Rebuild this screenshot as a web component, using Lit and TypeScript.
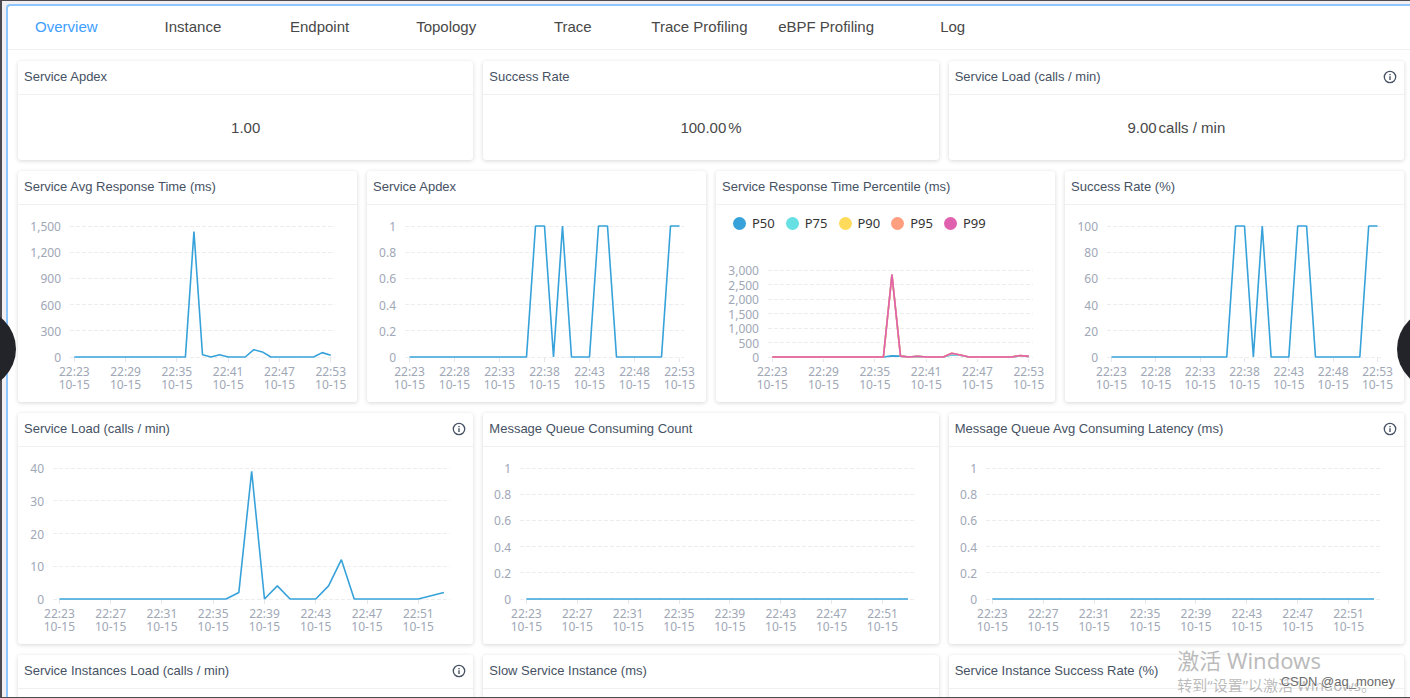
import { LitElement, html, svg, css, nothing } from "lit";
import { customElement, property, state } from "lit/decorators.js";
import { classMap } from "lit/directives/class-map.js";
import { styleMap } from "lit/directives/style-map.js";

interface Series {
  name: string;
  color: string;
  values: number[];
}

interface ChartSpec {
  max: number;
  ticks: string[];
  interval: number;
  left: number;
  right: number;
  legend?: boolean;
  series: Series[];
}

interface Widget {
  title: string;
  info?: boolean;
  value?: string;
  unit?: string;
  chart?: ChartSpec;
}

const POINTS = 31;
const START_MINUTE = 23;
const BLUE = "#37a2da";

/** Expands a sparse { minute index: value } map to the full time range. */
const sparse = (points: Record<number, number>): number[] =>
  Array.from({ length: POINTS }, (_, i) => points[i] ?? 0);

const single = (points: Record<number, number>): Series[] => [
  { name: "value", color: BLUE, values: sparse(points) },
];

const FRACTIONS = ["0", "0.2", "0.4", "0.6", "0.8", "1"];

const VALUES: Widget[] = [
  { title: "Service Apdex", value: "1.00" },
  { title: "Success Rate", value: "100.00", unit: "%" },
  { title: "Service Load (calls / min)", info: true, value: "9.00", unit: "calls / min" },
];

const RESPONSE: Widget[] = [
  {
    title: "Service Avg Response Time (ms)",
    chart: {
      max: 1500,
      ticks: ["0", "300", "600", "900", "1,200", "1,500"],
      interval: 6,
      left: 52,
      right: 22,
      series: single({ 14: 1435, 15: 25, 17: 25, 21: 84, 22: 58, 29: 50, 30: 20 }),
    },
  },
  {
    title: "Service Apdex",
    chart: {
      max: 1,
      ticks: FRACTIONS,
      interval: 5,
      left: 38,
      right: 22,
      series: single({ 14: 1, 15: 1, 17: 1, 21: 1, 22: 1, 29: 1, 30: 1 }),
    },
  },
  {
    title: "Service Response Time Percentile (ms)",
    chart: {
      max: 3000,
      ticks: ["0", "500", "1,000", "1,500", "2,000", "2,500", "3,000"],
      interval: 6,
      left: 52,
      right: 22,
      legend: true,
      series: [
        { name: "P50", color: BLUE, values: sparse({ 14: 40, 15: 30, 17: 20, 21: 80, 22: 60, 29: 40, 30: 20 }) },
        { name: "P75", color: "#67e0e3", values: sparse({ 14: 2840, 15: 30, 17: 20, 21: 90, 22: 65, 29: 45, 30: 20 }) },
        { name: "P90", color: "#ffdb5c", values: sparse({ 14: 2840, 15: 30, 17: 25, 21: 130, 22: 70, 29: 50, 30: 20 }) },
        { name: "P95", color: "#ff9f7f", values: sparse({ 14: 2840, 15: 30, 17: 25, 21: 130, 22: 70, 29: 50, 30: 20 }) },
        { name: "P99", color: "#e062ae", values: sparse({ 14: 2840, 15: 30, 17: 25, 21: 130, 22: 70, 29: 50, 30: 20 }) },
      ],
    },
  },
  {
    title: "Success Rate (%)",
    chart: {
      max: 100,
      ticks: ["0", "20", "40", "60", "80", "100"],
      interval: 5,
      left: 42,
      right: 22,
      series: single({ 14: 100, 15: 100, 17: 100, 21: 100, 22: 100, 29: 100, 30: 100 }),
    },
  },
];

const LOAD: Widget[] = [
  {
    title: "Service Load (calls / min)",
    info: true,
    chart: {
      max: 40,
      ticks: ["0", "10", "20", "30", "40"],
      interval: 4,
      left: 35,
      right: 23,
      series: single({ 14: 2, 15: 39, 17: 4, 21: 4, 22: 12, 29: 1, 30: 2 }),
    },
  },
  {
    title: "Message Queue Consuming Count",
    chart: { max: 1, ticks: FRACTIONS, interval: 4, left: 37, right: 24, series: single({}) },
  },
  {
    title: "Message Queue Avg Consuming Latency (ms)",
    info: true,
    chart: { max: 1, ticks: FRACTIONS, interval: 4, left: 37, right: 24, series: single({}) },
  },
];

const INSTANCES: Widget[] = [
  { title: "Service Instances Load (calls / min)", info: true },
  { title: "Slow Service Instance (ms)" },
  { title: "Service Instance Success Rate (%)" },
];

@customElement("line-chart")
export class LineChart extends LitElement {
  @property({ attribute: false }) spec!: ChartSpec;

  static styles = css`
    :host {
      display: flex;
      flex-direction: column;
      flex: 1;
      min-height: 0;
      margin: 0 10px;
      overflow: hidden;
      font-family: "Noto Sans", "Open Sans", sans-serif;
    }
    .legend {
      display: flex;
      gap: 11px;
      margin: 0;
      padding: 9px 0 0 7px;
      list-style: none;
      color: #333;
      font-size: 13px;
      line-height: 18px;
    }
    .entry {
      display: flex;
      align-items: center;
      gap: 6px;
    }
    .dot {
      width: 13px;
      height: 13px;
      border-radius: 50%;
    }
    .area {
      display: flex;
      flex: 1;
      min-height: 0;
      padding-top: 21px;
      padding-bottom: 45px;
    }
    .area.below {
      padding-top: 38px;
    }
    .plot {
      flex: 1;
      width: 100%;
      min-width: 0;
      height: auto;
      overflow: visible;
    }
    .grid {
      stroke: #ededf0;
      stroke-dasharray: 4 2;
      shape-rendering: crispEdges;
    }
    .tick {
      stroke: #e4e6ec;
      shape-rendering: crispEdges;
    }
    .label {
      fill: #a0a7b6;
      font-size: 12px;
    }
    .line {
      fill: none;
      stroke-width: 1.6;
      stroke-linejoin: bevel;
      vector-effect: non-scaling-stroke;
    }
  `;

  private yAxis() {
    const { ticks } = this.spec;
    return ticks.map((text, i) => {
      const y = `${100 - (i / (ticks.length - 1)) * 100}%`;
      return svg`
        <line class="grid" x1="0" x2="100%" y1=${y} y2=${y}></line>
        <text class="label" x="-9" y=${y} dy="5" text-anchor="end">${text}</text>`;
    });
  }

  private xAxis() {
    const marks = [];
    for (let i = 0; i < POINTS; i += this.spec.interval) {
      const x = `${((i + 0.5) / POINTS) * 100}%`;
      marks.push(svg`
        <g transform="translate(0 5)">
          <line class="tick" x1=${x} x2=${x} y1="97%" y2="100%"></line>
        </g>
        <text class="label" x=${x} y="100%" dy="19" text-anchor="middle">22:${START_MINUTE + i}</text>
        <text class="label" x=${x} y="100%" dy="32" text-anchor="middle">10-15</text>`);
    }
    return marks;
  }

  private lines() {
    const { series, max } = this.spec;
    return series.map((s) => {
      const points = s.values.map((v, i) => `${i + 0.5},${100 - (v / max) * 100}`).join(" ");
      return svg`<polyline class="line" points=${points} stroke=${s.color}></polyline>`;
    });
  }

  render() {
    const { left, right, legend, series } = this.spec;
    // The host keeps 10px free on both sides of the card.
    const margins = styleMap({ marginLeft: `${left - 10}px`, marginRight: `${right - 10}px` });
    return html`
      ${legend
        ? html`<ul class="legend">
            ${series.map(
              (s) => html`<li class="entry">
                <span class="dot" style=${styleMap({ background: s.color })}></span>${s.name}
              </li>`,
            )}
          </ul>`
        : nothing}
      <div class=${classMap({ area: true, below: !!legend })}>
        <svg class="plot" style=${margins} role="img" aria-label="Line chart">
          ${this.yAxis()} ${this.xAxis()}
          <svg width="100%" height="100%" viewBox="0 0 ${POINTS} 100" preserveAspectRatio="none" overflow="visible">
            ${this.lines()}
          </svg>
        </svg>
      </div>
    `;
  }
}

@customElement("dashboard-card")
export class DashboardCard extends LitElement {
  @property({ attribute: false }) widget!: Widget;

  static styles = css`
    :host {
      display: flex;
      flex-direction: column;
      min-width: 0;
      border-radius: 3px;
      background: #fff;
      box-shadow: 0 1px 4px rgba(0, 0, 0, 0.16);
    }
    .head {
      display: flex;
      flex-shrink: 0;
      align-items: center;
      justify-content: space-between;
      box-sizing: border-box;
      height: 34px;
      padding: 0 7px 2px 6px;
      border-bottom: 1px solid #f0f0f0;
    }
    .title {
      margin: 0;
      color: #465264;
      font-size: 13px;
      font-weight: 400;
      line-height: 18px;
      white-space: nowrap;
    }
    .info {
      display: flex;
      margin: 0;
      padding: 0;
      border: 0;
      background: none;
      color: #465264;
      cursor: pointer;
    }
    .value {
      display: flex;
      flex: 1;
      align-items: center;
      justify-content: center;
      gap: 2px;
      color: #484848;
      font-size: 15px;
    }
  `;

  render() {
    const { title, info, value, unit, chart } = this.widget;
    return html`
      <header class="head">
        <h2 class="title">${title}</h2>
        ${info
          ? html`<button class="info" aria-label="About ${title}">
              <svg width="14" height="14" viewBox="0 0 14 14" fill="none" stroke="currentColor">
                <circle cx="7" cy="7" r="5.7" stroke-width="1.3" />
                <path d="M7 6.3V10" stroke-width="1.4" />
                <path d="M7 4v1.3" stroke-width="1.4" />
              </svg>
            </button>`
          : nothing}
      </header>
      ${value
        ? html`<div class="value"><span>${value}</span>${unit ? html`<span>${unit}</span>` : nothing}</div>`
        : nothing}
      ${chart ? html`<line-chart .spec=${chart}></line-chart>` : nothing}
    `;
  }
}

@customElement("app-root")
export class AppRoot extends LitElement {
  @state() private active = "Overview";

  private tabs = [
    "Overview",
    "Instance",
    "Endpoint",
    "Topology",
    "Trace",
    "Trace Profiling",
    "eBPF Profiling",
    "Log",
  ];

  static styles = css`
    :host {
      display: flex;
      box-sizing: border-box;
      height: 100vh;
      padding: 3px 0 0 4px;
      border: solid #4c4a4e;
      border-width: 1px 0 1px 2px;
      overflow: hidden;
      background: #f1eff2;
      font-family: "Liberation Sans", Arial, sans-serif;
    }
    .panel {
      flex: 1;
      min-width: 0;
      border: 2px solid #8fc6ff;
      border-width: 2px 0 0 2px;
      border-top-left-radius: 4px;
      overflow: hidden;
      background: #fff;
    }
    .tabs {
      display: flex;
      margin-left: -5px;
      border-bottom: 1px solid #f0f0f0;
    }
    .tab {
      flex: 0 0 9%;
      height: 43px;
      padding: 0 0 2px;
      border: 0;
      background: none;
      color: #484848;
      font: 15px "Liberation Sans", Arial, sans-serif;
      white-space: nowrap;
      cursor: pointer;
    }
    .tab.active {
      color: #409eff;
    }
    .board {
      display: flex;
      flex-direction: column;
      gap: 11px;
      padding: 11px 6px 11px 10px;
    }
    .row {
      display: grid;
      grid-auto-columns: minmax(0, 1fr);
      grid-auto-flow: column;
      gap: 10px;
    }
    .short {
      grid-auto-rows: 99px;
    }
    .tall {
      grid-auto-rows: 231px;
    }
    .arrow {
      position: absolute;
      top: 50%;
      width: 80px;
      height: 80px;
      margin-top: -40px;
      padding: 0;
      border: 0;
      border-radius: 50%;
      background: #232429;
    }
    .previous {
      left: -64px;
    }
    .next {
      right: -67px;
    }
    .activation {
      position: absolute;
      right: 34px;
      bottom: 2px;
      margin: 0;
      color: rgba(120, 120, 120, 0.5);
      font-family: "Noto Sans", "Noto Sans CJK SC", sans-serif;
      font-size: 15px;
      line-height: 22px;
      white-space: nowrap;
      pointer-events: none;
    }
    .notice {
      display: block;
      font-size: 22px;
      line-height: 28px;
    }
    .credit {
      position: absolute;
      right: 15px;
      bottom: 8px;
      color: #6b6b6b;
      font-size: 13px;
      line-height: 16px;
      text-shadow: 0 0 1px #fff, 1px 1px 0 #fff;
    }
    .viewport {
      position: absolute;
      inset: 0;
      overflow: hidden;
      pointer-events: none;
    }
  `;

  private row(widgets: Widget[], size: string) {
    return html`<section class="row ${size}">
      ${widgets.map((w) => html`<dashboard-card .widget=${w}></dashboard-card>`)}
    </section>`;
  }

  render() {
    return html`
      <main class="panel">
        <nav class="tabs" role="tablist">
          ${this.tabs.map(
            (name) => html`<button
              class=${classMap({ tab: true, active: name === this.active })}
              role="tab"
              aria-selected=${name === this.active ? "true" : "false"}
              @click=${() => (this.active = name)}
            >
              ${name}
            </button>`,
          )}
        </nav>
        <div class="board">
          ${this.row(VALUES, "short")} ${this.row(RESPONSE, "tall")} ${this.row(LOAD, "tall")}
          ${this.row(INSTANCES, "tall")}
        </div>
      </main>
      <div class="viewport">
        <button class="arrow previous" aria-label="Previous"></button>
        <button class="arrow next" aria-label="Next"></button>
        <p class="activation"><span class="notice">激活 Windows</span>转到“设置”以激活 Windows。</p>
        <span class="credit">CSDN @aq_money</span>
      </div>
    `;
  }
}
